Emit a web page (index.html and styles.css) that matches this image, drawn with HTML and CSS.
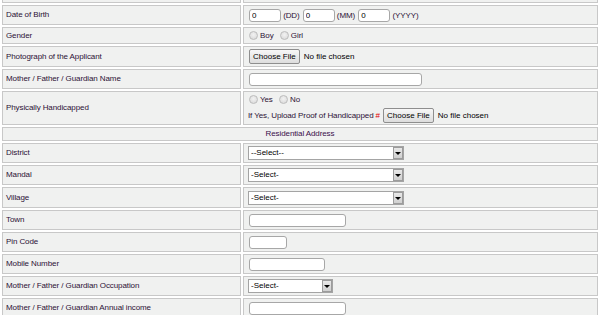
FILE: index.html
```html
<!DOCTYPE html>
<html lang="en">
<head>
  <meta charset="UTF-8">
  <title>Application Form</title>
  <link rel="stylesheet" href="styles.css">
</head>
<body>
  <table class="form">
    <tr class="r20">
      <td class="lbl"></td>
      <td class="fld"></td>
    </tr>
    <tr class="r20">
      <td class="lbl">Date of Birth</td>
      <td class="fld">
        <input type="text" class="txt w32" value="0"> <span class="unit">(DD)</span>
        <input type="text" class="txt w32" value="0"> <span class="unit">(MM)</span>
        <input type="text" class="txt w32" value="0"> <span class="unit">(YYYY)</span>
      </td>
    </tr>
    <tr class="r17">
      <td class="lbl">Gender</td>
      <td class="fld">
        <label class="opt"><input type="radio" name="gender"> Boy</label>
        <label class="opt"><input type="radio" name="gender"> Girl</label>
      </td>
    </tr>
    <tr class="r21">
      <td class="lbl">Photograph of the Applicant</td>
      <td class="fld"><input type="file" class="file"></td>
    </tr>
    <tr class="r20">
      <td class="lbl">Mother / Father / Guardian Name</td>
      <td class="fld"><input type="text" class="txt w173"></td>
    </tr>
    <tr class="r34">
      <td class="lbl">Physically Handicapped</td>
      <td class="fld">
        <div class="line">
          <label class="opt"><input type="radio" name="ph"> Yes</label>
          <label class="opt"><input type="radio" name="ph"> No</label>
        </div>
        <div class="line">
          If Yes, Upload Proof of Handicapped <span class="req">#</span>
          <input type="file" class="file">
        </div>
      </td>
    </tr>
    <tr class="r14">
      <td class="head" colspan="2">Residential Address</td>
    </tr>
    <tr class="r20">
      <td class="lbl">District</td>
      <td class="fld"><span class="sel w156"><select><option>--Select--</option></select></span></td>
    </tr>
    <tr class="r20">
      <td class="lbl">Mandal</td>
      <td class="fld"><span class="sel w156"><select><option>-Select-</option></select></span></td>
    </tr>
    <tr class="r21">
      <td class="lbl">Village</td>
      <td class="fld"><span class="sel w156"><select><option>-Select-</option></select></span></td>
    </tr>
    <tr class="r20">
      <td class="lbl">Town</td>
      <td class="fld"><input type="text" class="txt w97"></td>
    </tr>
    <tr class="r20">
      <td class="lbl">Pin Code</td>
      <td class="fld"><input type="text" class="txt w38"></td>
    </tr>
    <tr class="r20">
      <td class="lbl">Mobile Number</td>
      <td class="fld"><input type="text" class="txt w76"></td>
    </tr>
    <tr class="r20">
      <td class="lbl">Mother / Father / Guardian Occupation</td>
      <td class="fld"><span class="sel w85"><select><option>-Select-</option></select></span></td>
    </tr>
    <tr class="r20">
      <td class="lbl">Mother / Father / Guardian Annual income</td>
      <td class="fld"><input type="text" class="txt w97"></td>
    </tr>
  </table>
</body>
</html>
```

FILE: styles.css
```css
html {
  overflow: hidden;
}
body {
  margin: 0;
  background: #fff;
  font-family: "Liberation Sans", Arial, sans-serif;
  font-size: 8px;
  letter-spacing: -0.1px;
  color: #2d1236;
}
.form {
  width: 600px;
  border-spacing: 2px;
  margin-top: -19px;
}
.form td {
  box-sizing: border-box;
  background-color: #f0f1f0;
  border: 1px solid #c8c8c8;
  padding: 0 3px;
  vertical-align: middle;
  line-height: 10px;
}
.form td.lbl {
  width: 239px;
}
.form td.fld {
  padding-left: 4px;
}
.form td.head {
  text-align: center;
  color: #3a0f4a;
}
.r14 td { height: 14px; }
.r17 td { height: 17px; }
.r20 td { height: 20px; }
.r21 td { height: 21px; }
.r34 td { height: 34px; }

.txt {
  box-sizing: border-box;
  height: 13px;
  margin: 0 0 0 1px;
  padding: 0 2px;
  border: 1px solid #a7a7a7;
  border-radius: 3px;
  background: #fff;
  font: inherit;
  color: #000;
  vertical-align: middle;
}
.w32 { width: 32px; }
.w38 { width: 38px; }
.w76 { width: 76px; }
.w97 { width: 97px; }
.w173 { width: 173px; }
.unit {
  vertical-align: middle;
}

.opt {
  margin-right: 3px;
}
.opt input {
  appearance: none;
  box-sizing: border-box;
  width: 9px;
  height: 9px;
  margin: 0 0 0 1px;
  border: 1px solid #bcbcbc;
  border-radius: 50%;
  background: radial-gradient(circle at 50% 40%, #f2f2f2, #d6d6d6);
  vertical-align: -2px;
}

.file {
  height: 15px;
  font: inherit;
  letter-spacing: 0;
  color: #000;
  margin: 0 0 0 1px;
  vertical-align: middle;
}
.file::file-selector-button {
  font: inherit;
  color: #000;
  height: 15px;
  padding: 0 3px;
  margin: 0 4px 0 0;
  border: 1px solid #8e8e8e;
  border-radius: 2px;
  background: linear-gradient(#f7f7f7, #dddddd);
}
.line {
  line-height: 14px;
}
.line + .line {
  margin-top: 1px;
}
.req {
  color: #e00000;
}

.sel {
  position: relative;
  display: inline-block;
  vertical-align: middle;
}
.sel select {
  appearance: none;
  box-sizing: border-box;
  width: 100%;
  height: 14px;
  margin: 0;
  padding: 0 0 0 2px;
  border: 1px solid #a4a4a4;
  border-radius: 0;
  background: #fff;
  font: inherit;
  color: #000;
  display: block;
}
.sel::after {
  content: "";
  position: absolute;
  top: 1px;
  right: 1px;
  width: 8px;
  height: 10px;
  border: 1px solid #9c9c9c;
  background: linear-gradient(#e8e8e8, #d0d0d0);
}
.sel::before {
  content: "";
  position: absolute;
  z-index: 1;
  top: 6px;
  right: 3px;
  border-left: 3px solid transparent;
  border-right: 3px solid transparent;
  border-top: 3px solid #000;
}
.w156 { width: 156px; }
.w85 { width: 85px; }
```
